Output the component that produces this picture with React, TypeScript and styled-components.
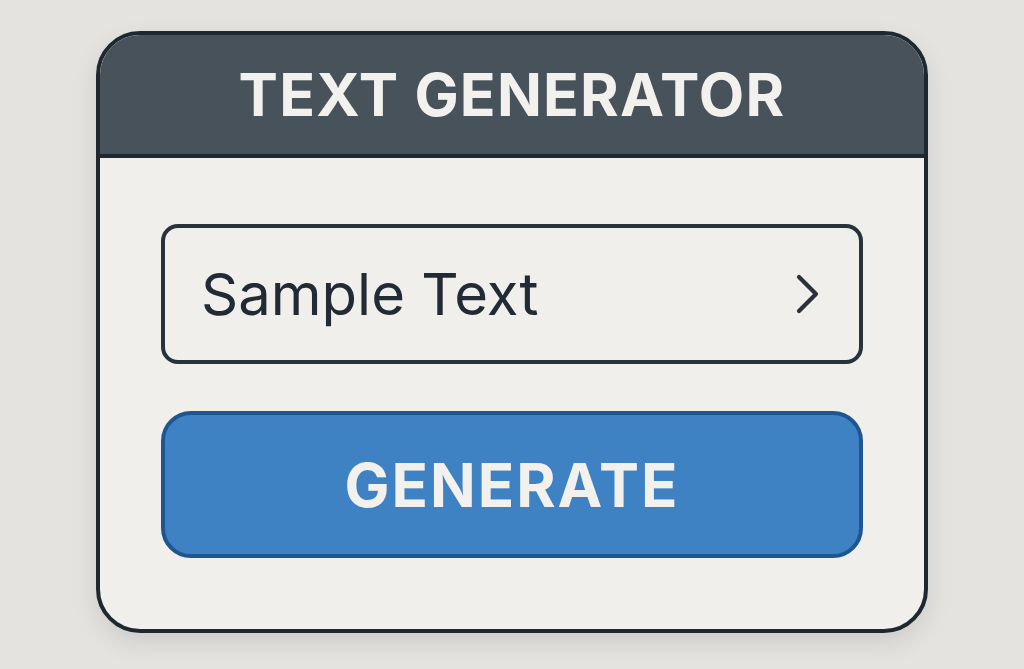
import React from "react";
import styled, { createGlobalStyle } from "styled-components";

const Global = createGlobalStyle`
  html, body { margin: 0; padding: 0; }
  body {
    background: #e4e3df;
    font-family: Inter, "Noto Sans", "Liberation Sans", sans-serif;
    height: 669px;
    overflow: hidden;
  }
`;

const Page = styled.div`
  display: flex;
  justify-content: center;
  padding-top: 31px;
`;

const Card = styled.div`
  width: 832px;
  height: 602px;
  box-sizing: border-box;
  border: 4px solid #1e2831;
  border-radius: 44px;
  overflow: hidden;
  background: #f0efeb;
  display: flex;
  flex-direction: column;
  box-shadow: 0 10px 24px rgba(0, 0, 0, 0.1);
`;

const Header = styled.div`
  height: 119px;
  flex-shrink: 0;
  background: #48525b;
  border-bottom: 4px solid #1e2831;
  display: flex;
  align-items: center;
  justify-content: center;
`;

const Title = styled.h1`
  margin: 0;
  color: #f2f1ed;
  font-weight: 700;
  font-size: 59px;
  letter-spacing: 1.2px;
`;

const Body = styled.div`
  flex: 1;
  display: flex;
  flex-direction: column;
  gap: 47px;
  padding: 66px 61px 0;
`;

const Field = styled.div`
  height: 140px;
  flex-shrink: 0;
  box-sizing: border-box;
  border: 4px solid #28323c;
  border-radius: 17px;
  display: flex;
  align-items: center;
  justify-content: space-between;
  padding: 0 38px 0 36px;
`;

const FieldText = styled.span`
  font-size: 58px;
  color: #222b35;
  font-weight: 400;
`;

const Button = styled.button`
  height: 147px;
  flex-shrink: 0;
  box-sizing: border-box;
  border: 4px solid #1d5690;
  border-radius: 30px;
  background: #3f82c4;
  color: #f2f1ed;
  font-family: inherit;
  font-weight: 700;
  font-size: 60px;
  letter-spacing: 2px;
  display: flex;
  align-items: center;
  justify-content: center;
`;

export default function App() {
  return (
    <>
      <Global />
      <Page>
        <Card>
          <Header>
            <Title>TEXT GENERATOR</Title>
          </Header>
          <Body>
            <Field>
              <FieldText>Sample Text</FieldText>
              <svg width="26" height="42" viewBox="0 0 26 42">
                <path d="M4 4 L21 21 L4 38" fill="none" stroke="#28323c" strokeWidth="4.2" strokeLinecap="round" strokeLinejoin="round" />
              </svg>
            </Field>
            <Button>GENERATE</Button>
          </Body>
        </Card>
      </Page>
    </>
  );
}
